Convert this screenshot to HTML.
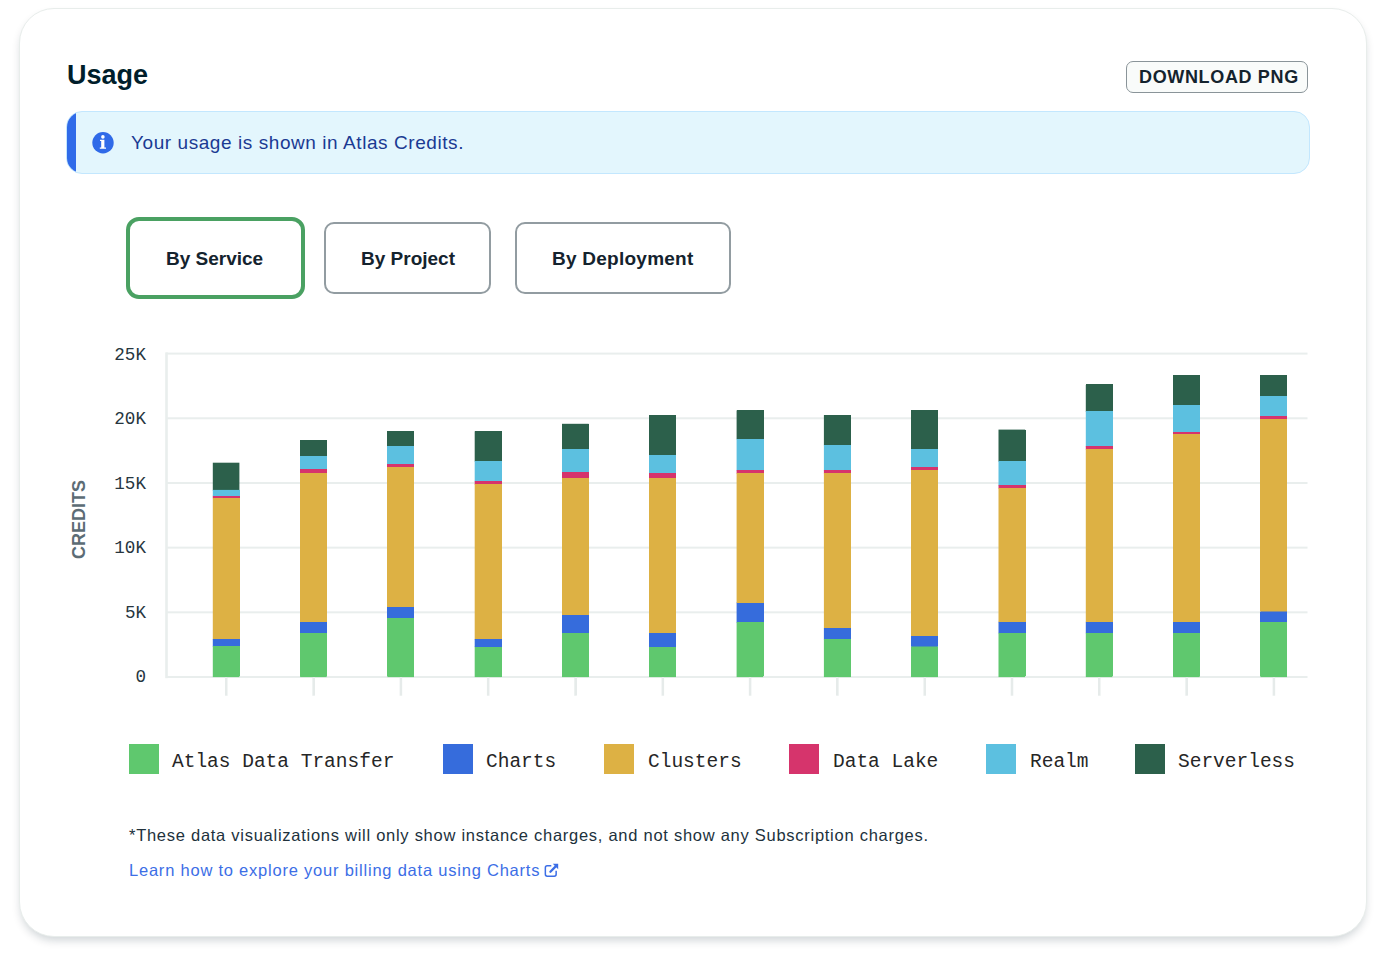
<!DOCTYPE html>
<html>
<head>
<meta charset="utf-8">
<style>
html,body{margin:0;padding:0;background:#ffffff;width:1380px;height:958px;overflow:hidden;}
body{position:relative;font-family:"Liberation Sans",sans-serif;}
.abs{position:absolute;white-space:nowrap;line-height:1;}
.card{position:absolute;left:19px;top:8px;width:1346px;height:927px;border:1px solid #E8EDEB;border-radius:35px;background:#fff;box-shadow:0 5px 10px -2px rgba(0,30,43,0.2);}
.title{left:67px;top:62px;font-size:27px;font-weight:bold;color:#001E2B;}
.dl{position:absolute;left:1126px;top:61px;width:180.4px;height:29.6px;border:1.8px solid #8A9499;border-radius:7px;background:#F9FBFA;}
.dltxt{left:1139px;top:68px;font-size:18px;font-weight:bold;color:#14232E;letter-spacing:0.65px;}
.banner{position:absolute;left:66px;top:111px;width:1242px;height:60.6px;border:1px solid #C3E7FE;border-radius:16px;background:#E3F6FD;overflow:hidden;}
.banner .bar{position:absolute;left:0;top:0;width:9px;height:100%;background:#306BE9;}
.btxt{left:131px;top:133px;font-size:19px;color:#1A3A93;letter-spacing:0.57px;}
.tab{position:absolute;box-sizing:border-box;border:2px solid #929CA1;border-radius:10px;background:#fff;}
.tab.sel{border:4.5px solid #4AA162;border-radius:13px;}
.ttxt{font-size:19px;font-weight:bold;color:#14232E;}
.grid{position:absolute;left:166px;width:1141px;height:2px;background:#EBEFEE;}
.ylab{font-family:"Liberation Mono",monospace;font-size:17.6px;color:#27363F;text-align:right;width:59px;}
.tick{position:absolute;width:2px;height:18px;top:677px;background:#E6EBEA;}
.seg{position:absolute;width:27px;}
.lg{position:absolute;width:30px;height:30px;top:744px;}
.lt{font-family:"Liberation Mono",monospace;font-size:19.5px;color:#262626;top:753px;}
.foot{left:129px;top:827px;font-size:16.5px;color:#21313C;letter-spacing:0.73px;}
.link{left:129px;top:862px;font-size:16.5px;color:#3C6EE6;letter-spacing:0.78px;}
</style>
</head>
<body>
<div class="card"></div>
<div class="abs title">Usage</div>
<div class="dl"></div>
<div class="abs dltxt">DOWNLOAD PNG</div>

<div class="banner"><div class="bar"></div></div>
<svg class="abs" style="left:92px;top:131.5px" width="22" height="22" viewBox="0 0 22 22">
  <circle cx="11" cy="10.7" r="10.7" fill="#2F6AE8"/>
  <circle cx="10.9" cy="4.9" r="1.8" fill="#fff"/>
  <path d="M8 7.8H12.4V15.5H14V16.8H7.8V15.5H9.2V9H8Z" fill="#fff"/>
</svg>
<div class="abs btxt">Your usage is shown in Atlas Credits.</div>

<div class="tab sel" style="left:126px;top:217px;width:179px;height:82px;"></div>
<div class="tab" style="left:324px;top:222px;width:167px;height:72px;"></div>
<div class="tab" style="left:515px;top:222px;width:216px;height:72px;"></div>
<div class="abs ttxt" style="left:166px;top:249px;">By Service</div>
<div class="abs ttxt" style="left:361px;top:249px;">By Project</div>
<div class="abs ttxt" style="left:552px;top:249px;letter-spacing:0.25px;">By Deployment</div>

<!-- chart -->

<div class="abs ylab" style="left:87px;top:346.8px">25K</div>
<div class="abs ylab" style="left:87px;top:411.2px">20K</div>
<div class="abs ylab" style="left:87px;top:475.7px">15K</div>
<div class="abs ylab" style="left:87px;top:540.3px">10K</div>
<div class="abs ylab" style="left:87px;top:604.9px">5K</div>
<div class="abs ylab" style="left:87px;top:669.3px">0</div>

<div class="abs" style="left:70px;top:559px;font-size:18px;font-weight:bold;color:#5C6C75;transform:rotate(-90deg);transform-origin:left top;letter-spacing:0px;">CREDITS</div>

<div id="bars">
<svg style="position:absolute;left:0;top:0" width="1380" height="958" viewBox="0 0 1380 958">
<rect x="166" y="352.60" width="1141.5" height="2" fill="#E9EEED"/>
<rect x="166" y="417.28" width="1141.5" height="2" fill="#E9EEED"/>
<rect x="166" y="481.96" width="1141.5" height="2" fill="#E9EEED"/>
<rect x="166" y="546.64" width="1141.5" height="2" fill="#E9EEED"/>
<rect x="166" y="611.32" width="1141.5" height="2" fill="#E9EEED"/>
<rect x="166" y="676.00" width="1141.5" height="2" fill="#E9EEED"/>
<rect x="165.2" y="352.4" width="2.6" height="325.8" fill="#E9EEED"/>
<rect x="225.00" y="677.5" width="2.6" height="18.3" fill="#E9EEED"/>
<rect x="212.8" y="462.7" width="26.6" height="27.8" fill="#2C604B"/>
<rect x="212.8" y="489.9" width="26.6" height="6.5" fill="#5CC0E0"/>
<rect x="212.8" y="495.8" width="26.6" height="2.5" fill="#D6346C"/>
<rect x="212.8" y="497.7" width="26.6" height="141.9" fill="#DDB144"/>
<rect x="212.8" y="639.0" width="26.6" height="7.9" fill="#366CDC"/>
<rect x="212.8" y="646.3" width="26.6" height="30.8" fill="#5FC86E"/>
<rect x="312.30" y="677.5" width="2.6" height="18.3" fill="#E9EEED"/>
<rect x="300.1" y="440.3" width="26.6" height="16.7" fill="#2C604B"/>
<rect x="300.1" y="456.4" width="26.6" height="12.8" fill="#5CC0E0"/>
<rect x="300.1" y="468.6" width="26.6" height="5.1" fill="#D6346C"/>
<rect x="300.1" y="473.1" width="26.6" height="149.5" fill="#DDB144"/>
<rect x="300.1" y="622.0" width="26.6" height="11.3" fill="#366CDC"/>
<rect x="300.1" y="632.7" width="26.6" height="44.4" fill="#5FC86E"/>
<rect x="399.60" y="677.5" width="2.6" height="18.3" fill="#E9EEED"/>
<rect x="387.4" y="431.2" width="26.6" height="15.4" fill="#2C604B"/>
<rect x="387.4" y="446.0" width="26.6" height="18.5" fill="#5CC0E0"/>
<rect x="387.4" y="463.9" width="26.6" height="3.7" fill="#D6346C"/>
<rect x="387.4" y="467.0" width="26.6" height="140.6" fill="#DDB144"/>
<rect x="387.4" y="607.0" width="26.6" height="11.2" fill="#366CDC"/>
<rect x="387.4" y="617.6" width="26.6" height="59.5" fill="#5FC86E"/>
<rect x="486.90" y="677.5" width="2.6" height="18.3" fill="#E9EEED"/>
<rect x="474.7" y="431.3" width="26.6" height="30.2" fill="#2C604B"/>
<rect x="474.7" y="460.9" width="26.6" height="20.6" fill="#5CC0E0"/>
<rect x="474.7" y="480.9" width="26.6" height="3.7" fill="#D6346C"/>
<rect x="474.7" y="484.0" width="26.6" height="155.6" fill="#DDB144"/>
<rect x="474.7" y="639.0" width="26.6" height="8.1" fill="#366CDC"/>
<rect x="474.7" y="646.5" width="26.6" height="30.6" fill="#5FC86E"/>
<rect x="574.20" y="677.5" width="2.6" height="18.3" fill="#E9EEED"/>
<rect x="562.0" y="423.8" width="26.6" height="25.8" fill="#2C604B"/>
<rect x="562.0" y="449.0" width="26.6" height="23.4" fill="#5CC0E0"/>
<rect x="562.0" y="471.8" width="26.6" height="6.7" fill="#D6346C"/>
<rect x="562.0" y="477.9" width="26.6" height="137.4" fill="#DDB144"/>
<rect x="562.0" y="614.7" width="26.6" height="18.9" fill="#366CDC"/>
<rect x="562.0" y="633.0" width="26.6" height="44.1" fill="#5FC86E"/>
<rect x="661.50" y="677.5" width="2.6" height="18.3" fill="#E9EEED"/>
<rect x="649.3" y="415.1" width="26.6" height="40.6" fill="#2C604B"/>
<rect x="649.3" y="455.1" width="26.6" height="18.5" fill="#5CC0E0"/>
<rect x="649.3" y="473.0" width="26.6" height="5.5" fill="#D6346C"/>
<rect x="649.3" y="477.9" width="26.6" height="155.7" fill="#DDB144"/>
<rect x="649.3" y="633.0" width="26.6" height="14.1" fill="#366CDC"/>
<rect x="649.3" y="646.5" width="26.6" height="30.6" fill="#5FC86E"/>
<rect x="748.80" y="677.5" width="2.6" height="18.3" fill="#E9EEED"/>
<rect x="736.6" y="410.4" width="26.6" height="28.8" fill="#2C604B"/>
<rect x="736.6" y="438.6" width="26.6" height="32.1" fill="#5CC0E0"/>
<rect x="736.6" y="470.1" width="26.6" height="3.5" fill="#D6346C"/>
<rect x="736.6" y="473.0" width="26.6" height="130.1" fill="#DDB144"/>
<rect x="736.6" y="602.5" width="26.6" height="20.3" fill="#366CDC"/>
<rect x="736.6" y="622.2" width="26.6" height="54.9" fill="#5FC86E"/>
<rect x="836.10" y="677.5" width="2.6" height="18.3" fill="#E9EEED"/>
<rect x="823.9" y="415.1" width="26.6" height="30.2" fill="#2C604B"/>
<rect x="823.9" y="444.7" width="26.6" height="26.0" fill="#5CC0E0"/>
<rect x="823.9" y="470.1" width="26.6" height="3.5" fill="#D6346C"/>
<rect x="823.9" y="473.0" width="26.6" height="155.9" fill="#DDB144"/>
<rect x="823.9" y="628.3" width="26.6" height="11.3" fill="#366CDC"/>
<rect x="823.9" y="639.0" width="26.6" height="38.1" fill="#5FC86E"/>
<rect x="923.40" y="677.5" width="2.6" height="18.3" fill="#E9EEED"/>
<rect x="911.2" y="410.4" width="26.6" height="39.2" fill="#2C604B"/>
<rect x="911.2" y="449.0" width="26.6" height="18.6" fill="#5CC0E0"/>
<rect x="911.2" y="467.0" width="26.6" height="3.5" fill="#D6346C"/>
<rect x="911.2" y="469.9" width="26.6" height="166.4" fill="#DDB144"/>
<rect x="911.2" y="635.7" width="26.6" height="11.4" fill="#366CDC"/>
<rect x="911.2" y="646.5" width="26.6" height="30.6" fill="#5FC86E"/>
<rect x="1010.70" y="677.5" width="2.6" height="18.3" fill="#E9EEED"/>
<rect x="998.5" y="429.6" width="26.6" height="32.0" fill="#2C604B"/>
<rect x="998.5" y="461.0" width="26.6" height="24.5" fill="#5CC0E0"/>
<rect x="998.5" y="484.9" width="26.6" height="3.7" fill="#D6346C"/>
<rect x="998.5" y="488.0" width="26.6" height="134.4" fill="#DDB144"/>
<rect x="998.5" y="621.8" width="26.6" height="11.6" fill="#366CDC"/>
<rect x="998.5" y="632.8" width="26.6" height="44.3" fill="#5FC86E"/>
<rect x="1098.00" y="677.5" width="2.6" height="18.3" fill="#E9EEED"/>
<rect x="1085.8" y="384.9" width="26.6" height="27.0" fill="#2C604B"/>
<rect x="1085.8" y="411.3" width="26.6" height="35.3" fill="#5CC0E0"/>
<rect x="1085.8" y="446.0" width="26.6" height="3.7" fill="#D6346C"/>
<rect x="1085.8" y="449.1" width="26.6" height="173.3" fill="#DDB144"/>
<rect x="1085.8" y="621.8" width="26.6" height="11.6" fill="#366CDC"/>
<rect x="1085.8" y="632.8" width="26.6" height="44.3" fill="#5FC86E"/>
<rect x="1185.30" y="677.5" width="2.6" height="18.3" fill="#E9EEED"/>
<rect x="1173.1" y="375.5" width="26.6" height="30.8" fill="#2C604B"/>
<rect x="1173.1" y="405.7" width="26.6" height="27.7" fill="#5CC0E0"/>
<rect x="1173.1" y="432.8" width="26.6" height="2.2" fill="#D6346C"/>
<rect x="1173.1" y="434.4" width="26.6" height="188.0" fill="#DDB144"/>
<rect x="1173.1" y="621.8" width="26.6" height="11.6" fill="#366CDC"/>
<rect x="1173.1" y="632.8" width="26.6" height="44.3" fill="#5FC86E"/>
<rect x="1272.60" y="677.5" width="2.6" height="18.3" fill="#E9EEED"/>
<rect x="1260.4" y="375.3" width="26.6" height="21.4" fill="#2C604B"/>
<rect x="1260.4" y="396.1" width="26.6" height="20.2" fill="#5CC0E0"/>
<rect x="1260.4" y="415.7" width="26.6" height="3.8" fill="#D6346C"/>
<rect x="1260.4" y="418.9" width="26.6" height="193.2" fill="#DDB144"/>
<rect x="1260.4" y="611.5" width="26.6" height="10.9" fill="#366CDC"/>
<rect x="1260.4" y="621.8" width="26.6" height="55.3" fill="#5FC86E"/>
</svg>
</div>
<div class="seg" style="left:212.8px;top:489.9px;height:5.9px;background:#5CC0E0"></div>
<div class="seg" style="left:212.8px;top:495.8px;height:1.9px;background:#D6346C"></div>
<div class="seg" style="left:212.8px;top:497.7px;height:141.3px;background:#DDB144"></div>
<div class="seg" style="left:212.8px;top:639.0px;height:7.3px;background:#366CDC"></div>
<div class="seg" style="left:212.8px;top:646.3px;height:30.2px;background:#5FC86E"></div>
<div class="tick" style="left:225.3px"></div>
<div class="seg" style="left:300.1px;top:440.3px;height:16.1px;background:#2C604B"></div>
<div class="seg" style="left:300.1px;top:456.4px;height:12.2px;background:#5CC0E0"></div>
<div class="seg" style="left:300.1px;top:468.6px;height:4.5px;background:#D6346C"></div>
<div class="seg" style="left:300.1px;top:473.1px;height:148.9px;background:#DDB144"></div>
<div class="seg" style="left:300.1px;top:622.0px;height:10.7px;background:#366CDC"></div>
<div class="seg" style="left:300.1px;top:632.7px;height:43.8px;background:#5FC86E"></div>
<div class="tick" style="left:312.6px"></div>
<div class="seg" style="left:387.4px;top:431.2px;height:14.8px;background:#2C604B"></div>
<div class="seg" style="left:387.4px;top:446.0px;height:17.9px;background:#5CC0E0"></div>
<div class="seg" style="left:387.4px;top:463.9px;height:3.1px;background:#D6346C"></div>
<div class="seg" style="left:387.4px;top:467.0px;height:140.0px;background:#DDB144"></div>
<div class="seg" style="left:387.4px;top:607.0px;height:10.6px;background:#366CDC"></div>
<div class="seg" style="left:387.4px;top:617.6px;height:58.9px;background:#5FC86E"></div>
<div class="tick" style="left:399.9px"></div>
<div class="seg" style="left:474.7px;top:431.3px;height:29.6px;background:#2C604B"></div>
<div class="seg" style="left:474.7px;top:460.9px;height:20.0px;background:#5CC0E0"></div>
<div class="seg" style="left:474.7px;top:480.9px;height:3.1px;background:#D6346C"></div>
<div class="seg" style="left:474.7px;top:484.0px;height:155.0px;background:#DDB144"></div>
<div class="seg" style="left:474.7px;top:639.0px;height:7.5px;background:#366CDC"></div>
<div class="seg" style="left:474.7px;top:646.5px;height:30.0px;background:#5FC86E"></div>
<div class="tick" style="left:487.2px"></div>
<div class="seg" style="left:562.0px;top:423.8px;height:25.2px;background:#2C604B"></div>
<div class="seg" style="left:562.0px;top:449.0px;height:22.8px;background:#5CC0E0"></div>
<div class="seg" style="left:562.0px;top:471.8px;height:6.1px;background:#D6346C"></div>
<div class="seg" style="left:562.0px;top:477.9px;height:136.8px;background:#DDB144"></div>
<div class="seg" style="left:562.0px;top:614.7px;height:18.3px;background:#366CDC"></div>
<div class="seg" style="left:562.0px;top:633.0px;height:43.5px;background:#5FC86E"></div>
<div class="tick" style="left:574.5px"></div>
<div class="seg" style="left:649.3px;top:415.1px;height:40.0px;background:#2C604B"></div>
<div class="seg" style="left:649.3px;top:455.1px;height:17.9px;background:#5CC0E0"></div>
<div class="seg" style="left:649.3px;top:473.0px;height:4.9px;background:#D6346C"></div>
<div class="seg" style="left:649.3px;top:477.9px;height:155.1px;background:#DDB144"></div>
<div class="seg" style="left:649.3px;top:633.0px;height:13.5px;background:#366CDC"></div>
<div class="seg" style="left:649.3px;top:646.5px;height:30.0px;background:#5FC86E"></div>
<div class="tick" style="left:661.8px"></div>
<div class="seg" style="left:736.6px;top:410.4px;height:28.2px;background:#2C604B"></div>
<div class="seg" style="left:736.6px;top:438.6px;height:31.5px;background:#5CC0E0"></div>
<div class="seg" style="left:736.6px;top:470.1px;height:2.9px;background:#D6346C"></div>
<div class="seg" style="left:736.6px;top:473.0px;height:129.5px;background:#DDB144"></div>
<div class="seg" style="left:736.6px;top:602.5px;height:19.7px;background:#366CDC"></div>
<div class="seg" style="left:736.6px;top:622.2px;height:54.3px;background:#5FC86E"></div>
<div class="tick" style="left:749.1px"></div>
<div class="seg" style="left:823.9px;top:415.1px;height:29.6px;background:#2C604B"></div>
<div class="seg" style="left:823.9px;top:444.7px;height:25.4px;background:#5CC0E0"></div>
<div class="seg" style="left:823.9px;top:470.1px;height:2.9px;background:#D6346C"></div>
<div class="seg" style="left:823.9px;top:473.0px;height:155.3px;background:#DDB144"></div>
<div class="seg" style="left:823.9px;top:628.3px;height:10.7px;background:#366CDC"></div>
<div class="seg" style="left:823.9px;top:639.0px;height:37.5px;background:#5FC86E"></div>
<div class="tick" style="left:836.4px"></div>
<div class="seg" style="left:911.2px;top:410.4px;height:38.6px;background:#2C604B"></div>
<div class="seg" style="left:911.2px;top:449.0px;height:18.0px;background:#5CC0E0"></div>
<div class="seg" style="left:911.2px;top:467.0px;height:2.9px;background:#D6346C"></div>
<div class="seg" style="left:911.2px;top:469.9px;height:165.8px;background:#DDB144"></div>
<div class="seg" style="left:911.2px;top:635.7px;height:10.8px;background:#366CDC"></div>
<div class="seg" style="left:911.2px;top:646.5px;height:30.0px;background:#5FC86E"></div>
<div class="tick" style="left:923.7px"></div>
<div class="seg" style="left:998.5px;top:429.6px;height:31.4px;background:#2C604B"></div>
<div class="seg" style="left:998.5px;top:461.0px;height:23.9px;background:#5CC0E0"></div>
<div class="seg" style="left:998.5px;top:484.9px;height:3.1px;background:#D6346C"></div>
<div class="seg" style="left:998.5px;top:488.0px;height:133.8px;background:#DDB144"></div>
<div class="seg" style="left:998.5px;top:621.8px;height:11.0px;background:#366CDC"></div>
<div class="seg" style="left:998.5px;top:632.8px;height:43.7px;background:#5FC86E"></div>
<div class="tick" style="left:1011.0px"></div>
<div class="seg" style="left:1085.8px;top:384.4px;height:26.6px;background:#2C604B"></div>
<div class="seg" style="left:1085.8px;top:411.0px;height:34.6px;background:#5CC0E0"></div>
<div class="seg" style="left:1085.8px;top:445.6px;height:3.4px;background:#D6346C"></div>
<div class="seg" style="left:1085.8px;top:449.0px;height:172.8px;background:#DDB144"></div>
<div class="seg" style="left:1085.8px;top:621.8px;height:11.0px;background:#366CDC"></div>
<div class="seg" style="left:1085.8px;top:632.8px;height:43.7px;background:#5FC86E"></div>
<div class="tick" style="left:1098.3px"></div>
<div class="seg" style="left:1173.1px;top:375.3px;height:29.9px;background:#2C604B"></div>
<div class="seg" style="left:1173.1px;top:405.2px;height:26.8px;background:#5CC0E0"></div>
<div class="seg" style="left:1173.1px;top:432.0px;height:2.2px;background:#D6346C"></div>
<div class="seg" style="left:1173.1px;top:434.2px;height:187.6px;background:#DDB144"></div>
<div class="seg" style="left:1173.1px;top:621.8px;height:11.0px;background:#366CDC"></div>
<div class="seg" style="left:1173.1px;top:632.8px;height:43.7px;background:#5FC86E"></div>
<div class="tick" style="left:1185.6px"></div>
<div class="seg" style="left:1260.4px;top:375.3px;height:20.8px;background:#2C604B"></div>
<div class="seg" style="left:1260.4px;top:396.1px;height:19.6px;background:#5CC0E0"></div>
<div class="seg" style="left:1260.4px;top:415.7px;height:3.2px;background:#D6346C"></div>
<div class="seg" style="left:1260.4px;top:418.9px;height:192.6px;background:#DDB144"></div>
<div class="seg" style="left:1260.4px;top:611.5px;height:10.3px;background:#366CDC"></div>
<div class="seg" style="left:1260.4px;top:621.8px;height:54.7px;background:#5FC86E"></div>
<div class="tick" style="left:1272.9px"></div>
</div>

<!-- legend -->
<div class="lg" style="left:129px;background:#5FC86E"></div>
<div class="abs lt" style="left:172px">Atlas Data Transfer</div>
<div class="lg" style="left:443px;background:#366CDC"></div>
<div class="abs lt" style="left:486px">Charts</div>
<div class="lg" style="left:604px;background:#DDB144"></div>
<div class="abs lt" style="left:648px">Clusters</div>
<div class="lg" style="left:789px;background:#D6346C"></div>
<div class="abs lt" style="left:833px">Data Lake</div>
<div class="lg" style="left:986px;background:#5CC0E0"></div>
<div class="abs lt" style="left:1030px">Realm</div>
<div class="lg" style="left:1135px;background:#2C604B"></div>
<div class="abs lt" style="left:1178px">Serverless</div>

<div class="abs foot">*These data visualizations will only show instance charges, and not show any Subscription charges.</div>
<div class="abs link">Learn how to explore your billing data using Charts</div>
<svg class="abs" style="left:538px;top:858px" width="26" height="24" viewBox="0 0 26 24" fill="none">
  <path d="M13.3 7.85H9.2Q7.35 7.85 7.35 9.7V16.3Q7.35 18.15 9.2 18.15H16.3Q18.15 18.15 18.15 16.3V12.8" stroke="#3C6EE6" stroke-width="1.5"/>
  <path d="M14.8 5.8H20.2V11.2Z" fill="#3C6EE6"/>
  <path d="M12.4 13.7L18.2 7.9" stroke="#3C6EE6" stroke-width="2.3" stroke-linecap="round"/>
</svg>
</body>
</html>
